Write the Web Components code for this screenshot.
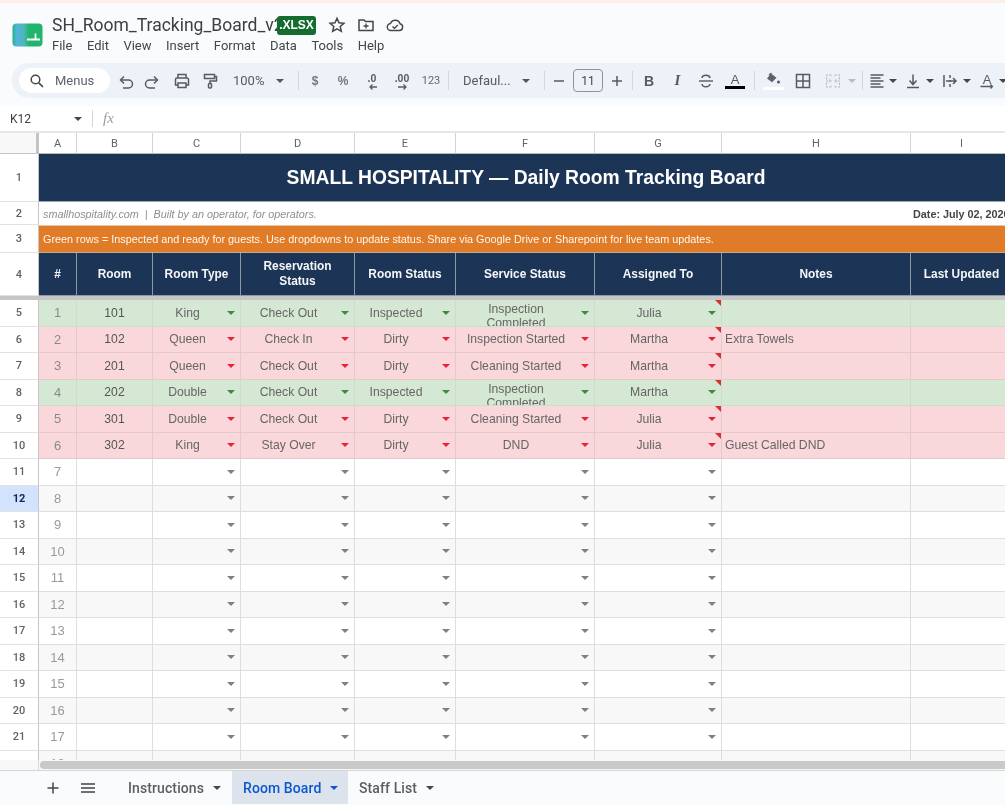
<!DOCTYPE html>
<html><head><meta charset="utf-8"><title>SH_Room_Tracking_Board_v2</title>
<style>
html,body{margin:0;padding:0;background:#f9fbfd;width:1005px;height:805px;overflow:hidden}
body{font-family:"Liberation Sans",Arial,sans-serif}
</style></head>
<body>
<sheets-app></sheets-app>
<script>
const ICON={
undo:'<path d="M5 8h7.5a4 4 0 0 1 0 8H7" fill="none" stroke="C" stroke-width="1.5"/><path d="M8 4.5 4.5 8 8 11.5" fill="none" stroke="C" stroke-width="1.5"/>',
redo:'<path d="M13 8H5.5a4 4 0 0 0 0 8H11" fill="none" stroke="C" stroke-width="1.5"/><path d="M10 4.5 13.5 8 10 11.5" fill="none" stroke="C" stroke-width="1.5"/>',
print:'<path d="M5 6V2.5h8V6M5 13H2.5V7.5a1.5 1.5 0 0 1 1.5-1.5h10a1.5 1.5 0 0 1 1.5 1.5V13H13M5 11h8v4.5H5z" fill="none" stroke="C" stroke-width="1.5"/>',
paint:'<path d="M3.5 2.5h10v4h-10zM13.5 4.5h2v4.5H9v2.5" fill="none" stroke="C" stroke-width="1.5"/><rect x="7.5" y="11.5" width="3" height="4.5" rx="1" fill="none" stroke="C" stroke-width="1.5"/>',
strike:'<path d="M2 9h14" stroke="C" stroke-width="1.4"/><path d="M13 6c-.3-1.700-2-2.700-4-2.700S5.200 4.300 5 6M5 12c.2 1.800 2 2.800 4 2.800s3.700-1 4-2.800" fill="none" stroke="C" stroke-width="1.5"/>',
fill:'<path d="M7 1.500 3 6.500l5 3.800 4.500-4.500z" fill="#5f6368"/><path d="M5 3 7.500 1" stroke="C" stroke-width="1.2"/><circle cx="14.500" cy="10" r="1.500" fill="C"/>',
borders:'<path d="M2.500 2.500h13v13h-13zM9 2.500v13M2.500 9h13" fill="none" stroke="C" stroke-width="1.500"/>',
merge:'<path d="M2.500 7.500V3h5v1.500M2.500 10.500V15h5v-1.500M15.500 7.500V3h-5v1.500M15.500 10.500V15h-5v-1.500M2 9h5M16 9h-5M5.500 7.500 7 9l-1.500 1.500M12.500 7.500 11 9l1.500 1.500" fill="none" stroke="C" stroke-width="1.100" stroke-dasharray="2.500 1"/>',
align:'<path d="M2.500 3h13M2.500 6h10M2.500 9h13M2.500 12h10M2.500 15h13" stroke="C" stroke-width="1.300"/>',
valign:'<path d="M3 15.500h12M9 2.500v9.500M5.500 8.500 9 12.500l3.500-4" fill="none" stroke="C" stroke-width="1.500"/>',
wrap:'<path d="M3 3v12M9 3v3M9 8v2M9 12v3" fill="none" stroke="C" stroke-width="1.500"/><path d="M5 9h10M12 6l3 3-3 3" fill="none" stroke="C" stroke-width="1.500"/>',
rotate:'<text x="9" y="12" font-family="Liberation Sans" font-size="13" text-anchor="middle" fill="C">A</text><path d="M2.500 14.500h12M12.500 12.500l2 2-2 2" fill="none" stroke="C" stroke-width="1.300"/>'
};
function svg(name,color='#555b61',w=18,h=18){return `<svg width="${w}" height="${h}" viewBox="0 0 18 18" style="display:block;flex:none">${ICON[name].replaceAll('"C"','"'+color+'"')}</svg>`}
const caret=(c='#444746')=>`<svg width="8" height="4" viewBox="0 0 8 4" style="display:block;flex:none"><path d="M0 0h8L4 4z" fill="${c}"/></svg>`;

class TitleBar extends HTMLElement{
 constructor(){super();this.attachShadow({mode:'open'}).innerHTML=`<style>
 :host{display:flex;height:59px;box-sizing:border-box;padding:11px 0 0 12px;background:#f9fbfd;font-family:Roboto,"Noto Sans",sans-serif;color:#444746}
 .logo{margin-top:9px;flex:none}
 .col{margin-left:9px;display:flex;flex-direction:column}
 .t{display:flex;align-items:center;height:22px}
 .name{font-size:17.500px;color:#3c4043;width:225px;white-space:nowrap}
 .chip{background:#146c2e;color:#fff;font:bold 12px "Liberation Sans",sans-serif;border-radius:3px;width:39px;height:19px;display:flex;align-items:center;justify-content:center}
 .ic{margin-left:11px;width:18px;height:18px;flex:none}
 .m{display:flex;gap:14.500px;font-size:13px;margin-top:1px;line-height:18px;color:#444746}
 </style>
 <svg class="logo" width="31" height="24" viewBox="0 0 31 24"><defs><linearGradient id="lg" x1="0" x2="1" y1="0" y2="0"><stop offset="0" stop-color="#1fb57a"/><stop offset=".12" stop-color="#4fb3dc"/><stop offset=".38" stop-color="#4db7b8"/><stop offset=".55" stop-color="#1fb56c"/><stop offset="1" stop-color="#20b56c"/></linearGradient></defs><rect x=".5" y=".5" width="30" height="23" rx="4" fill="url(#lg)"/><path d="M15 16.500h13M23.500 10.500v6" stroke="#fff" stroke-width="1.800" fill="none"/></svg>
 <div class="col"><div class="t"><span class="name">SH_Room_Tracking_Board_v2</span><span class="chip">.XLSX</span>
 <svg class="ic" style="margin-left:12px" viewBox="0 0 18 18"><path d="M9 2.300l2 4.500 4.900.5-3.700 3.200 1.100 4.800L9 12.800l-4.300 2.500 1.100-4.800L2.100 7.300 7 6.800z" fill="none" stroke="#444746" stroke-width="1.500"/></svg>
 <svg class="ic" viewBox="0 0 18 18"><path d="M2 4h5l1.500 1.500H16v9H2z" fill="none" stroke="#444746" stroke-width="1.500"/><path d="M9 7.500v5M6.500 10h5" stroke="#444746" stroke-width="1.300"/></svg>
 <svg class="ic" viewBox="0 0 18 18"><path d="M5 14.500a3.500 3.500 0 0 1-.5-7A5 5 0 0 1 14 7.800a3.400 3.400 0 0 1-.5 6.700z" fill="none" stroke="#444746" stroke-width="1.400"/><path d="M6.500 10.500l2 1.800 3.300-3.300" fill="none" stroke="#444746" stroke-width="1.300"/></svg>
 </div><div class="m"><span>File</span><span>Edit</span><span>View</span><span>Insert</span><span>Format</span><span>Data</span><span>Tools</span><span>Help</span></div></div>`}
}
customElements.define('title-bar',TitleBar);

class ToolBtn extends HTMLElement{
 constructor(){super();this.attachShadow({mode:'open'}).innerHTML=`<style>
 :host{display:flex;align-items:center;justify-content:center;flex:none;height:100%;box-sizing:border-box;color:#555b61;font:12px Roboto,sans-serif}
 :host([left]){justify-content:flex-start}
 </style><slot></slot>`}
 connectedCallback(){this.style.width=this.getAttribute('w')+'px';
  if(this.hasAttribute('pad'))this.style.paddingLeft=this.getAttribute('pad')+'px';
  if(this.hasAttribute('gap'))this.style.gap=this.getAttribute('gap')+'px';}
}
customElements.define('tool-btn',ToolBtn);

class ToolSep extends HTMLElement{
 constructor(){super();this.attachShadow({mode:'open'}).innerHTML=`<style>
 :host{display:flex;justify-content:center;align-items:center;flex:none;height:100%}
 i{display:block;width:1px;height:19px;background:#d3d6da}
 </style><i></i>`}
 connectedCallback(){this.style.width=this.getAttribute('w')+'px'}
}
customElements.define('tool-sep',ToolSep);

class ToolBar extends HTMLElement{
 constructor(){super();
  const b=(w,inner,x='')=>`<tool-btn w="${w}" ${x}>${inner}</tool-btn>`, s=w=>`<tool-sep w="${w}"></tool-sep>`;
  const wrapDec=(txt,path)=>`<svg width="26" height="18" viewBox="0 0 26 18"><text x="13" y="10" text-anchor="middle" font-family="Liberation Sans" font-weight="bold" font-size="10.500" fill="#555b61">${txt}</text><path d="${path}" fill="none" stroke="#555b61" stroke-width="1.300"/></svg>`;
  this.attachShadow({mode:'open'}).innerHTML=`<style>
 :host{display:block;height:43px;box-sizing:border-box;padding:1px 0 0 12px;background:#f9fbfd;overflow:hidden}
 .pill{display:flex;height:35px;width:1010px;background:#edf2f8;border-radius:17px 0 0 17px;box-sizing:border-box;padding-left:7px;align-items:center}
 .search{flex:none;width:91px;height:25px;box-sizing:border-box;padding-left:10px;background:#fff;border-radius:13px;display:flex;align-items:center;gap:10px;font:13px Roboto,sans-serif;color:#5f6368}
 .tx{font:13px Roboto,sans-serif;color:#555b61}
 .sm{font:11px Roboto,sans-serif;color:#666}
 .d{font:bold 12px "Liberation Sans",sans-serif;color:#777}
 .size{width:28px;height:21px;border:1px solid #8f9399;border-radius:4px;display:flex;align-items:center;justify-content:center;font:12px Roboto,sans-serif;color:#444}
 .bi{font:bold 14px "Liberation Sans",sans-serif;color:#555b61}
 .ii{font:italic bold 15px "Liberation Serif",serif;color:#555b61}
 .colA{display:flex;flex-direction:column;align-items:center;line-height:13px}
 .colA span{font:13px "Liberation Sans",sans-serif;color:#555b61;line-height:13px}
 .colA i{display:block;width:20px;height:3px;background:#000;margin-top:0}
 </style><div class="pill">
 <div class="search"><svg width="16" height="16" viewBox="0 0 16 16"><circle cx="6.500" cy="6.500" r="4.300" fill="none" stroke="#444746" stroke-width="1.500"/><path d="M9.800 9.800 14 14" stroke="#444746" stroke-width="1.700"/></svg><span>Menus</span></div>
 ${b(29,svg('undo'))}${b(28,svg('redo'))}${b(29,svg('print'))}${b(28,svg('paint'))}
 ${b(71,`<span class="tx">100%</span>${caret('#555')}`,'left pad="9" gap="12"')}${s(6)}
 ${b(28,'<span class="d">$</span>')}${b(28,'<span class="d">%</span>')}
 ${b(30,wrapDec('.0','M18 15h-7M13.500 12.500 11 15l2.500 2.500'))}${b(30,wrapDec('.00','M9 15h8M14.500 12.500 17 15l-2.500 2.500'))}
 ${b(28,'<span class="sm">123</span>')}${s(7)}
 ${b(89,`<span class="tx">Defaul...</span>${caret('#555')}`,'left pad="11" gap="11"')}${s(6)}
 ${b(24,'<svg width="12" height="2" viewBox="0 0 12 2"><path d="M1 1h10" stroke="#555b61" stroke-width="1.500"/></svg>')}
 ${b(34,'<div class="size">11</div>')}
 ${b(24,'<svg width="12" height="12" viewBox="0 0 12 12"><path d="M1 6h10M6 1v10" stroke="#555b61" stroke-width="1.500"/></svg>')}${s(6)}
 ${b(28,'<span class="bi">B</span>')}${b(29,'<span class="ii">I</span>')}${b(28,svg('strike'))}
 ${b(30,'<div class="colA"><span>A</span><i></i></div>')}${s(9)}
 ${b(28,`<div style="display:flex;flex-direction:column;align-items:center">${svg('fill','#555b61',18,14).replace('viewBox="0 0 18 18"','viewBox="0 0 18 14"')}<i style="display:block;width:21px;height:3px;background:#fff;margin-top:1px"></i></div>`)}
 ${b(31,svg('borders'))}
 ${b(40,svg('merge','#b9bcc0')+caret('#b9bcc0'),'left pad="6" gap="6"')}${s(8)}
 ${b(36,svg('align')+caret(),'left pad="2" gap="3"')}
 ${b(38,svg('valign')+caret(),'left pad="2" gap="4"')}
 ${b(37,svg('wrap')+caret(),'left pad="1" gap="4"')}
 ${b(35,svg('rotate')+caret(),'left pad="1" gap="3"')}
 </div>`}
}
customElements.define('tool-bar',ToolBar);

class FormulaBar extends HTMLElement{
 constructor(){super();this.attachShadow({mode:'open'}).innerHTML=`<style>
 :host{display:flex;align-items:center;height:25px;background:#fff;border-bottom:2px solid #e6e6e6;margin-top:1px;box-sizing:content-box;padding-left:10px;font:12px Roboto,sans-serif;color:#3c4043}
 .ref{width:64px}
 .sep{width:1px;height:17px;background:#d5d7da;margin-left:10px}
 .fx{margin-left:10px;font:italic 15px "Liberation Serif",serif;color:#9a9da1}
 </style><span class="ref">K12</span>${caret()}<span class="sep"></span><span class="fx">fx</span>`}
}
customElements.define('formula-bar',FormulaBar);

class SheetGrid extends HTMLElement{
 constructor(){super();
  const cols=[39,38,76,88,114,101,139,127,189,102];
  const letters=['','A','B','C','D','E','F','G','H','I'];
  const data=[
   ['rg',1,101,'King','Check Out','Inspected','Inspection<br>Completed','Julia',''],
   ['rr',2,102,'Queen','Check In','Dirty','Inspection Started','Martha','Extra Towels'],
   ['rr',3,201,'Queen','Check Out','Dirty','Cleaning Started','Martha',''],
   ['rg',4,202,'Double','Check Out','Inspected','Inspection<br>Completed','Martha',''],
   ['rr',5,301,'Double','Check Out','Dirty','Cleaning Started','Julia',''],
   ['rr',6,302,'King','Stay Over','Dirty','DND','Julia','Guest Called DND']];
  const rows=[21,48,23,28,43,4,...Array(18).fill(26.5)];
  let h='';
  letters.forEach((l,i)=>{h+= i==0?'<div class="corner"></div>':`<div class="ch">${l}</div>`});
  h+=`<div class="rh">1</div><div class="navy" style="grid-column:2/-1">SMALL HOSPITALITY — Daily Room Tracking Board</div>`;
  h+=`<div class="rh">2</div><div class="sub" style="grid-column:2/10"><span>smallhospitality.com&nbsp; |&nbsp; Built by an operator, for operators.</span></div><div class="date"><span>Date: July 02, 2026</span></div>`;
  h+=`<div class="rh">3</div><div class="orange" style="grid-column:2/-1">Green rows = Inspected and ready for guests. Use dropdowns to update status. Share via Google Drive or Sharepoint for live team updates.</div>`;
  h+=`<div class="rh">4</div>`+['#','Room','Room Type','Reservation<br>Status','Room Status','Service Status','Assigned To','Notes','Last Updated'].map(t=>`<div class="th">${t}</div>`).join('');
  h+=`<div class="frozen" style="grid-column:1/-1"></div>`;
  for(let r=0;r<18;r++){
   const d=data[r]||['',r+1,'','','','','','',''];
   const k=d[0]; const alt=!k&&r%2==1?' alt':'';
   const row=r+5;
   h+=`<div class="rh${row==12?' sel':''}">${row<=21?row:''}</div>`;
   const cc=k?' '+k:alt;
   h+=`<div class="c num${cc}">${d[1]}</div><div class="c mid dark${cc}">${d[2]}</div>`;
   for(let j=3;j<8;j++){
    const two=String(d[j]).includes('<br>');
    const arrow=k=='rg'?'#3d8b40':k=='rr'?'#e6233a':'#808080';
    h+=`<div class="c dd${cc}"><span class="v${two?' two':''}">${d[j]}</span><span class="ar" style="border-top-color:${arrow}"></span>${j==7&&k?'<span class="cm"></span>':''}</div>`;
   }
   h+=`<div class="c note${cc}">${d[8]}</div><div class="c${cc}"></div>`;
  }
  this.attachShadow({mode:'open'}).innerHTML=`<style>
 :host{display:block;height:627px;overflow:hidden;background:#fff}
 .grid{display:grid;width:1012px;grid-template-columns:${cols.map(c=>c+'px').join(' ')};grid-template-rows:${rows.map(c=>c+'px').join(' ')};font:12.200px "Liberation Sans",Arial,sans-serif;color:#595959}
 .grid>div{box-sizing:border-box;min-width:0;min-height:0;overflow:hidden}
 .corner{background:#f8f8f8;border-right:3px solid #c4c4c4;border-bottom:1px solid #c4c4c4}
 .ch{background:#fff;border-right:1px solid #d4d4d4;border-bottom:1px solid #b8b8b8;display:flex;align-items:center;justify-content:center;font:11px Roboto,sans-serif;color:#5f6368}
 .rh{background:#fff;border-right:1px solid #c6c6c6;border-bottom:1px solid #e2e2e2;display:flex;align-items:center;justify-content:center;font:500 11px Roboto,sans-serif;color:#5f6368}
 .rh.sel{background:#d3e3fd;color:#0b2a5b;font-weight:700}
 .navy{background:#1c3557;color:#fff;font:bold 19.300px "Liberation Sans",sans-serif;display:flex;align-items:center;justify-content:center;border-bottom:1px solid #9aa5b3}
 .sub{display:flex;align-items:center;padding-left:4px;font:italic 10.800px "Liberation Sans",sans-serif;color:#8f8f8f;background:#fff}
 .date{display:flex;align-items:center;padding-left:2px;font:bold 10.800px "Liberation Sans",sans-serif;color:#444;background:#fff;white-space:nowrap}
 .orange{background:#e07b28;color:#fff6ec;display:flex;align-items:center;padding-left:4px;font:10.830px "Liberation Sans",sans-serif;white-space:nowrap;border-top:1px solid #e8c7a8;border-bottom:1px solid #c9a98e}
 .th{background:#1c3557;color:#f4f6f8;font:bold 11.900px/15px "Liberation Sans",sans-serif;display:flex;align-items:center;justify-content:center;text-align:center;border-right:1px solid #8e99a8;border-bottom:1px solid #8e99a8}
 .frozen{background:#c6c6c6}
 .c{position:relative;background:#fff;border-right:1px solid #dedede;border-bottom:1px solid #dedede;display:flex;align-items:center;justify-content:center;color:#666}
 .alt{background:#f8f8f8}
 .c.rg{background:#d5e8d4;border-color:#cddccd}
 .c.rr{background:#fad7db;border-color:#e4c9cc}
 .num{color:#999;font-size:13px}
 .c.rg.num,.c.rr.num{color:#8a8a8a}
 .dark{color:#555}
 .dd{padding-right:18px;text-align:center}
 .v{display:block;line-height:14px}
 .v.two{align-self:flex-start;margin-top:2px}
 .ar{position:absolute;right:5px;top:50%;margin-top:-2px;width:0;height:0;border-left:4px solid transparent;border-right:4px solid transparent;border-top:4px solid #808080}
 .cm{position:absolute;right:0;top:0;width:0;height:0;border-top:6px solid #d93030;border-left:6px solid transparent}
 .note{justify-content:flex-start;padding-left:3px}
 </style><div class="grid">${h}</div>`}
}
customElements.define('sheet-grid',SheetGrid);

class ScrollStrip extends HTMLElement{
 constructor(){super();this.attachShadow({mode:'open'}).innerHTML=`<style>
 :host{display:flex;height:11px;background:#f8f8f8;border-bottom:1px solid #d6d6d6;box-sizing:border-box}
 .l{width:39px;border-right:1px solid #dcdcdc;flex:none;box-sizing:border-box}
 .t{flex:1;height:8px;margin:0 0 0 1px;background:#c9c9c9;border-radius:4px 0 0 4px;align-self:center}
 </style><div class="l"></div><div class="t"></div>`}
}
customElements.define('scroll-strip',ScrollStrip);

class SheetTab extends HTMLElement{
 constructor(){super();this.attachShadow({mode:'open'}).innerHTML=`<style>
 :host{display:flex;align-items:center;flex:none;gap:9px;height:100%;box-sizing:border-box;font:500 14px Roboto,sans-serif;letter-spacing:.1px;color:#5a5e63}
 :host([active]){background:#dce3ec;color:#0b57d0}
 </style><slot></slot>`}
 connectedCallback(){
  this.style.width=this.getAttribute('w')+'px';this.style.paddingLeft=this.getAttribute('pad')+'px';
  this.insertAdjacentHTML('beforeend',caret(this.hasAttribute('active')?'#0b57d0':'#444746'));
 }
}
customElements.define('sheet-tab',SheetTab);

class TabBar extends HTMLElement{
 constructor(){super();this.attachShadow({mode:'open'}).innerHTML=`<style>
 :host{display:flex;height:34px;background:#f9fbfd;box-sizing:border-box;padding:0 0 1px 46px;align-items:stretch}
 .a{display:flex;align-items:center;justify-content:center;flex:none;width:14px}
 .b{margin-left:21px}
 .tabs{display:flex;margin-left:33px}
 </style><div class="a"><svg width="12" height="12" viewBox="0 0 12 12"><path d="M.500 6h11M6 .500v11" stroke="#444746" stroke-width="1.500"/></svg></div>
 <div class="a b"><svg width="14" height="10" viewBox="0 0 14 10"><path d="M0 1h14M0 5h14M0 9h14" stroke="#444746" stroke-width="1.300"/></svg></div>
 <div class="tabs"><slot></slot></div>`}
}
customElements.define('tab-bar',TabBar);

class SheetsApp extends HTMLElement{
 constructor(){super();this.attachShadow({mode:'open'}).innerHTML=`<style>
 :host{display:block;width:1005px;height:805px;overflow:hidden;background:#f9fbfd;filter:blur(.35px)}
 .stripe{height:3px;background:#fdeee6}
 </style><div class="stripe"></div><title-bar></title-bar><tool-bar></tool-bar><formula-bar></formula-bar><sheet-grid></sheet-grid><scroll-strip></scroll-strip>
 <tab-bar><sheet-tab w="104" pad="0">Instructions</sheet-tab><sheet-tab w="116" pad="11" active>Room Board</sheet-tab><sheet-tab w="100" pad="11">Staff List</sheet-tab></tab-bar>`}
}
customElements.define('sheets-app',SheetsApp);
</script>
</body></html>
